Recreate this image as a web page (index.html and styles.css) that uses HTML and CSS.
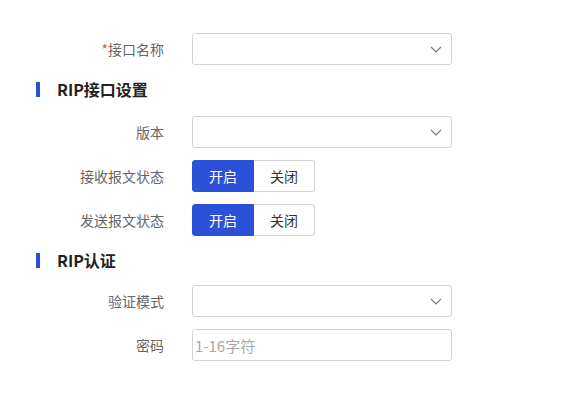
FILE: index.html
```html
<!DOCTYPE html>
<html lang="zh">
<head>
<meta charset="utf-8">
<link rel="stylesheet" href="styles.css">
</head>
<body>
<div class="form">
  <div class="row">
    <div class="label"><span class="req">*</span>接口名称</div>
    <div class="select"><svg class="chev" width="12" height="12" viewBox="0 0 12 12"><polyline points="1,4 6,9 11,4" fill="none" stroke="#7a7a7a" stroke-width="1.2"/></svg></div>
  </div>
  <div class="section first">RIP接口设置</div>
  <div class="row">
    <div class="label">版本</div>
    <div class="select"><svg class="chev" width="12" height="12" viewBox="0 0 12 12"><polyline points="1,4 6,9 11,4" fill="none" stroke="#7a7a7a" stroke-width="1.2"/></svg></div>
  </div>
  <div class="row">
    <div class="label">接收报文状态</div>
    <div class="seg"><div class="seg-btn on">开启</div><div class="seg-btn">关闭</div></div>
  </div>
  <div class="row">
    <div class="label">发送报文状态</div>
    <div class="seg"><div class="seg-btn on">开启</div><div class="seg-btn">关闭</div></div>
  </div>
  <div class="section">RIP认证</div>
  <div class="row">
    <div class="label">验证模式</div>
    <div class="select"><svg class="chev" width="12" height="12" viewBox="0 0 12 12"><polyline points="1,4 6,9 11,4" fill="none" stroke="#7a7a7a" stroke-width="1.2"/></svg></div>
  </div>
  <div class="row">
    <div class="label">密码</div>
    <div class="input"><span class="ph">1-16字符</span></div>
  </div>
</div>
</body>
</html>
```
FILE: styles.css
```css
html, body {
  margin: 0;
  padding: 0;
  background: #ffffff;
}
body {
  font-family: "Noto Sans CJK SC", "Noto Sans", sans-serif;
  font-size: 14px;
  color: #333;
}
.form {
  padding-top: 33px;
  display: flex;
  flex-direction: column;
  gap: 12px;
}
.row {
  display: flex;
  align-items: center;
  height: 32px;
}
.label {
  width: 192px;
  box-sizing: border-box;
  padding-right: 28px;
  text-align: right;
  color: #666;
  font-size: 14px;
  line-height: 20px;
}
.req {
  color: #e0524f;
}
.select, .input {
  width: 260px;
  height: 32px;
  box-sizing: border-box;
  border: 1px solid #d4d4d4;
  border-radius: 3px;
  display: flex;
  align-items: center;
}
.select {
  justify-content: flex-end;
  padding-right: 9px;
}
.chev {
  display: block;
}
.input {
  padding-left: 2px;
}
.ph {
  color: #a8a8a8;
  font-size: 15px;
}
.section {
  margin: 0 0 1px;
  padding-left: 36px;
  height: 24px;
  display: flex;
  align-items: center;
  gap: 17px;
  font-size: 16px;
  font-weight: bold;
  color: #222;
}
.section.first {
  margin-bottom: 3px;
}
.section::before {
  content: "";
  width: 4px;
  height: 15px;
  background: #2b51d9;
}
.seg {
  display: flex;
  height: 32px;
}
.seg-btn {
  width: 62px;
  height: 32px;
  box-sizing: border-box;
  border: 1px solid #d4d4d4;
  display: flex;
  align-items: center;
  justify-content: center;
  color: #333;
  font-size: 14px;
}
.seg-btn:first-child {
  border-radius: 3px 0 0 3px;
}
.seg-btn:last-child {
  width: 61px;
  border-left: none;
  border-radius: 0 3px 3px 0;
}
.seg-btn.on {
  background: #2b51d9;
  border-color: #2b51d9;
  color: #fff;
}
```
